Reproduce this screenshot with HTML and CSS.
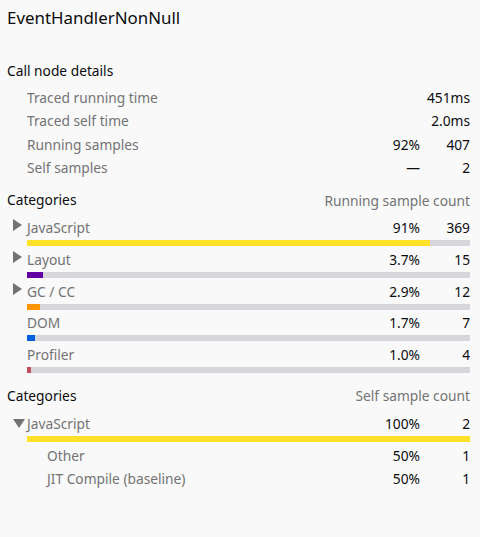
FILE: index.html
```html
<!DOCTYPE html>
<html>
<head>
<meta charset="utf-8">
<link rel="stylesheet" href="styles.css">
</head>
<body>
<div class="sidebar">
  <h1 class="title">EventHandlerNonNull</h1>

  <h2 class="section-title">Call node details</h2>
  <div class="details">
    <div class="drow"><span class="dlabel">Traced running time</span><span class="pct"></span><span class="num">451ms</span></div>
    <div class="drow"><span class="dlabel">Traced self time</span><span class="pct"></span><span class="num">2.0ms</span></div>
    <div class="drow"><span class="dlabel">Running samples</span><span class="pct">92%</span><span class="num">407</span></div>
    <div class="drow"><span class="dlabel">Self samples</span><span class="pct">—</span><span class="num">2</span></div>
  </div>

  <div class="cat-header"><span class="section-title">Categories</span><span class="cat-sub">Running sample count</span></div>
  <div class="cats">
    <div class="cat">
      <div class="cat-line"><span class="tri right"></span><span class="cname">JavaScript</span><span class="pct">91%</span><span class="num">369</span></div>
      <div class="bar"><div class="fill js" style="width:91%"></div></div>
    </div>
    <div class="cat">
      <div class="cat-line"><span class="tri right"></span><span class="cname">Layout</span><span class="pct">3.7%</span><span class="num">15</span></div>
      <div class="bar"><div class="fill layout" style="width:3.7%"></div></div>
    </div>
    <div class="cat">
      <div class="cat-line"><span class="tri right"></span><span class="cname">GC / CC</span><span class="pct">2.9%</span><span class="num">12</span></div>
      <div class="bar"><div class="fill gc" style="width:2.9%"></div></div>
    </div>
    <div class="cat">
      <div class="cat-line"><span class="tri"></span><span class="cname">DOM</span><span class="pct">1.7%</span><span class="num">7</span></div>
      <div class="bar"><div class="fill dom" style="width:1.7%"></div></div>
    </div>
    <div class="cat">
      <div class="cat-line"><span class="tri"></span><span class="cname">Profiler</span><span class="pct">1.0%</span><span class="num">4</span></div>
      <div class="bar"><div class="fill prof" style="width:1.0%"></div></div>
    </div>
  </div>

  <div class="cat-header"><span class="section-title">Categories</span><span class="cat-sub">Self sample count</span></div>
  <div class="cats">
    <div class="cat">
      <div class="cat-line"><span class="tri down"></span><span class="cname">JavaScript</span><span class="pct">100%</span><span class="num">2</span></div>
      <div class="bar"><div class="fill js" style="width:100%"></div></div>
    </div>
    <div class="sub"><span class="sname">Other</span><span class="pct">50%</span><span class="num">1</span></div>
    <div class="sub"><span class="sname">JIT Compile (baseline)</span><span class="pct">50%</span><span class="num">1</span></div>
  </div>
</div>
</body>
</html>
```

FILE: styles.css
```css
html, body {
  margin: 0;
  padding: 0;
  background: #f9f9fa;
}
body {
  font-family: "Noto Sans", "Open Sans", sans-serif;
  color: #0c0c0d;
  width: 480px;
  height: 537px;
  overflow: hidden;
}
.sidebar {
  padding: 6px 10px 0 7px;
}
.title {
  font-size: 16.9px;
  font-weight: 400;
  line-height: 24px;
  margin: 0 0 31px 0;
}
.section-title {
  font-size: 13.75px;
  font-weight: 400;
  line-height: 20px;
  margin: 0;
}
.details {
  padding: 5px 0 7px 20px;
}
.drow, .sub {
  display: grid;
  grid-template-columns: 1fr auto 50px;
  font-size: 13.75px;
  line-height: 23.3px;
}
.dlabel, .sname {
  color: #737373;
}
.pct, .num {
  text-align: right;
}
.cat-header {
  display: flex;
  justify-content: space-between;
  align-items: center;
  margin-top: 4px;
  height: 20px;
}
.cat-sub {
  font-size: 13.75px;
  color: #737373;
}
.cats {
  padding-top: 8px;
  margin-bottom: 12.5px;
}
.cat {
  padding-left: 20px;
  margin-bottom: 3.75px;
}
.cat-line {
  display: grid;
  grid-template-columns: 1fr auto 50px;
  font-size: 13.75px;
  line-height: 20px;
  position: relative;
}
.cname {
  color: #737373;
}
.tri {
  position: absolute;
  left: -14px;
  top: 1px;
}
.tri.right {
  border-left: 9px solid #737373;
  border-top: 6px solid transparent;
  border-bottom: 6px solid transparent;
}
.tri.down {
  top: 5px;
  border-top: 9px solid #737373;
  border-left: 6px solid transparent;
  border-right: 6px solid transparent;
}
.bar {
  height: 6px;
  margin-top: 2px;
  background: #d7d7db;
}
.fill {
  height: 100%;
}
.js { background: #ffe12a; }
.layout { background: #6200a4; }
.gc { background: #ff9400; }
.dom { background: #0060df; }
.prof { background: #c0505c; }
.sub {
  padding-left: 40px;
}
.cats .cat + .sub {
  margin-top: -1.5px;
}
```
